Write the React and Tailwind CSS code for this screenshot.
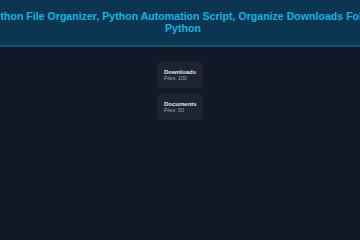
export default function App() {
  const folders = [
    { name: 'Downloads', count: 100 },
    { name: 'Documents', count: 50 },
  ]

  return (
    <div className="min-h-[240px] w-full bg-[#111827] font-['Liberation_Sans',Arial,sans-serif]">
      <header className="flex justify-center overflow-hidden bg-[#0c3551] border-b-2 border-[#11506f] pl-[6px] pt-[10px] pb-[11px]">
        <h1 className="w-[400px] shrink-0 text-center text-[10.6px] leading-[12px] font-bold text-[#0fb5e3]">
          Python File Organizer, Python Automation Script, Organize Downloads Folder Python
        </h1>
      </header>

      <main className="flex flex-col items-center gap-[6px] pt-[15px]">
        {folders.map((f) => (
          <div key={f.name} className="w-[46px] rounded-[3px] bg-[#1c2433] px-[7px] py-[7px]">
            <p className="text-[6px] leading-[6px] font-bold text-[#e5e7eb] whitespace-nowrap">{f.name}</p>
            <p className="text-[5.25px] leading-[6px] text-[#9ca3af] whitespace-nowrap">Files: {f.count}</p>
          </div>
        ))}
      </main>
    </div>
  )
}
